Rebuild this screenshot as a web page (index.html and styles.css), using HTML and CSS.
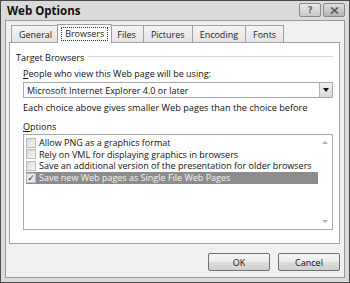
FILE: index.html
```html
<!DOCTYPE html>
<html lang="en">
<head>
  <meta charset="UTF-8">
  <title>Web Options</title>
  <link rel="stylesheet" href="styles.css">
</head>
<body>
  <div class="window">
    <div class="titlebar">
      <span class="title">Web Options</span>
      <div class="caption-btns">
        <button class="cap-btn">?</button>
        <button class="cap-btn close">
          <svg width="9" height="7" viewBox="0 0 9 7"><path d="M1 0.5 L8 6.5 M8 0.5 L1 6.5" stroke="#555" stroke-width="1.6"/></svg>
        </button>
      </div>
    </div>

    <div class="client">
      <div class="tabs">
        <div class="tab">General</div>
        <div class="tab active"><span class="focus">Browsers</span></div>
        <div class="tab">Files</div>
        <div class="tab">Pictures</div>
        <div class="tab">Encoding</div>
        <div class="tab">Fonts</div>
      </div>

      <div class="panel">
        <div class="group-title"><span>Target Browsers</span><div class="rule"></div></div>

        <div class="label"><u>P</u>eople who view this Web page will be using:</div>
        <div class="select">
          <span>Microsoft Internet Explorer 4.0 or later</span>
          <div class="drop-btn"></div>
        </div>
        <div class="note">Each choice above gives smaller Web pages than the choice before</div>

        <div class="label options-label"><u>O</u>ptions</div>
        <div class="listbox">
          <ul class="opt-list">
            <li><span class="chk"></span>Allow PNG as a graphics format</li>
            <li><span class="chk"></span>Rely on VML for displaying graphics in browsers</li>
            <li><span class="chk"></span>Save an additional version of the presentation for older browsers</li>
            <li class="selected"><span class="chk checked">&#10003;</span>Save new Web pages as Single File Web Pages</li>
          </ul>
          <div class="scrollbar">
            <span class="arrow up"></span>
            <span class="arrow down"></span>
          </div>
        </div>
      </div>

      <div class="footer">
        <button class="btn">OK</button>
        <button class="btn">Cancel</button>
      </div>
    </div>
  </div>
</body>
</html>
```

FILE: styles.css
```css
* {
  box-sizing: border-box;
}

body {
  margin: 0;
  padding: 0;
  background: #fff;
  font-family: "Open Sans", "Noto Sans", sans-serif;
  font-size: 9px;
  color: #111;
}

.window {
  width: 350px;
  height: 283px;
  background: #dadada;
  border: 1px solid #4a4a4a;
  padding: 0 4px 4px 4px;
  display: flex;
  flex-direction: column;
}

.titlebar {
  height: 19px;
  display: flex;
  align-items: center;
  justify-content: space-between;
  padding-left: 2px;
}

.title {
  font-weight: 700;
  font-size: 11.5px;
  color: #111;
}

.caption-btns {
  display: flex;
  gap: 2px;
  margin-top: -1px;
}

.cap-btn {
  width: 22px;
  height: 14px;
  padding: 0;
  border: 1px solid #8a8a8a;
  border-radius: 2px;
  background: linear-gradient(#eaeaea, #c8c8c8);
  font-family: "DejaVu Sans", sans-serif;
  font-size: 9px;
  font-weight: 700;
  color: #666;
  line-height: 10px;
  display: flex;
  align-items: center;
  justify-content: center;
}

.cap-btn.close {
  width: 22px;
  background: linear-gradient(#dcdcdc, #b4b4b4);
}

.client {
  flex: 1;
  background: #f0f0f0;
  border: 1px solid #9a9a9a;
  padding: 2px 4px 0 3px;
  display: flex;
  flex-direction: column;
}

.tabs {
  display: flex;
  align-items: flex-end;
  padding-left: 2px;
  height: 19px;
}

.tab {
  height: 17px;
  padding: 0 7px;
  border: 1px solid #a0a0a0;
  border-bottom: none;
  margin-right: -1px;
  background: linear-gradient(#f4f4f4, #e4e4e4);
  display: flex;
  align-items: center;
  color: #222;
}

.tab.active {
  height: 19px;
  background: #fff;
  position: relative;
  z-index: 1;
  margin-bottom: -1px;
  padding: 0 3px;
  margin-left: -2px;
  margin-right: -3px;
}

.tab.active .focus {
  border: 1px dotted #333;
  padding: 0 3px;
  line-height: 12px;
}

.panel {
  height: 202px;
  background: #fff;
  border: 1px solid #a0a0a0;
  padding: 8px 6px 0 6px;
}

.group-title {
  display: flex;
  align-items: center;
  gap: 4px;
  height: 12px;
}

.rule {
  flex: 1;
  height: 2px;
  border-top: 1px solid #d6d6d6;
  border-bottom: 1px solid #fff;
}

.label {
  margin: 5px 0 0 7px;
  height: 11px;
  line-height: 11px;
}

.select {
  margin: 3px 0 0 7px;
  height: 16px;
  border: 1px solid #a8a8a8;
  display: flex;
  align-items: center;
  justify-content: space-between;
  padding-left: 3px;
  background: #fff;
}

.drop-btn {
  width: 13px;
  height: 14px;
  background: linear-gradient(#f2f2f2, #d8d8d8);
  border-left: 1px solid #b4b4b4;
  position: relative;
}

.drop-btn::after {
  content: "";
  position: absolute;
  left: 3px;
  top: 5px;
  border-left: 3px solid transparent;
  border-right: 3px solid transparent;
  border-top: 4px solid #111;
}

.note {
  margin: 4px 0 0 7px;
  height: 11px;
  line-height: 11px;
  font-size: 9.2px;
}

.options-label {
  margin-top: 8px;
}

.listbox {
  margin: 2px 0 0 7px;
  height: 96px;
  border: 1px solid #a8a8a8;
  display: flex;
}

.opt-list {
  list-style: none;
  margin: 0;
  padding: 2px 0 0 2px;
  flex: 1;
}

.opt-list li {
  height: 11.5px;
  line-height: 11px;
  display: flex;
  align-items: center;
  gap: 3px;
  color: #111;
}

.opt-list li.selected {
  background: #8c8c8c;
  color: #f4f4f4;
  height: 12px;
}

.chk {
  width: 10px;
  height: 10px;
  border: 1px solid #bcbcbc;
  background: linear-gradient(135deg, #d8d8d8, #f6f6f6);
  font-size: 9px;
  line-height: 8px;
  color: #333;
  text-align: center;
  font-family: "DejaVu Sans", sans-serif;
}

.chk.checked {
  background: #e8e8e8;
}

.scrollbar {
  width: 14px;
  display: flex;
  flex-direction: column;
  justify-content: space-between;
  align-items: center;
  padding: 6px 0 6px 0;
}

.arrow {
  width: 0;
  height: 0;
  border-left: 3px solid transparent;
  border-right: 3px solid transparent;
}

.arrow.up {
  border-bottom: 3px solid #b0b0b0;
}

.arrow.down {
  border-top: 3px solid #b0b0b0;
}

.footer {
  flex: 1;
  display: flex;
  justify-content: flex-end;
  align-items: center;
  gap: 8px;
  padding-top: 3px;
}

.btn {
  width: 62px;
  height: 18px;
  border: 1px solid #707070;
  border-radius: 2px;
  background: linear-gradient(#f6f6f6 0%, #ebebeb 50%, #dddddd 51%, #cfcfcf 100%);
  font-family: "Open Sans", "Noto Sans", sans-serif;
  font-size: 9px;
  color: #111;
  padding: 0;
}
```
